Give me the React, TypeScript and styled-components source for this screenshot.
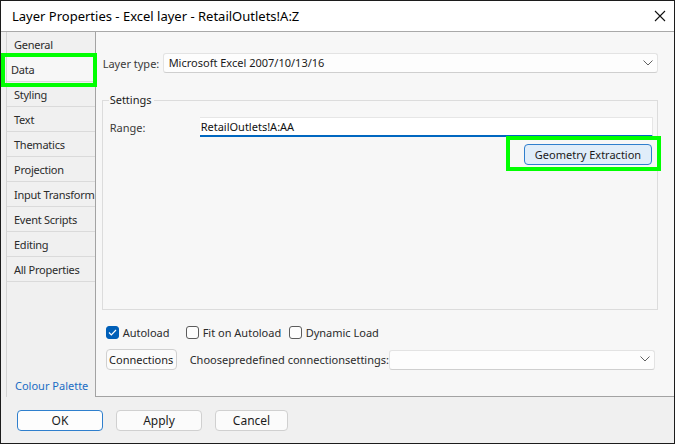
import styled, { createGlobalStyle } from "styled-components";

const GlobalStyle = createGlobalStyle`
  html, body {
    margin: 0;
    padding: 0;
    background: #ffffff;
  }
  body {
    font-family: "Noto Sans", "Open Sans", sans-serif;
    font-size: 11px;
    color: #1b1b1b;
  }
  * {
    box-sizing: border-box;
  }
`;

const Window = styled.div`
  position: relative;
  width: 675px;
  height: 444px;
  display: flex;
  flex-direction: column;
  border: 1px solid #1c1c1c;
  background: #f0f0f0;
  overflow: hidden;
`;

const TitleBar = styled.div`
  flex: 0 0 31px;
  display: flex;
  align-items: center;
  justify-content: space-between;
  padding: 0 8px 0 11px;
  background: #ffffff;
  border-bottom: 1px solid #a9a9a9;
  font-size: 13px;
  color: #000;
`;

const Body = styled.div`
  flex: 1 1 auto;
  display: flex;
  padding-left: 5px;
`;

const Sidebar = styled.div`
  width: 89px;
  display: flex;
  flex-direction: column;
  border-left: 1px solid #d4d4d4;
`;

const Tab = styled.div<{ $active?: boolean }>`
  height: 25px;
  display: flex;
  align-items: center;
  padding-left: ${(p) => (p.$active ? "4px" : "7px")};
  border-bottom: 1px solid #dadada;
  background: ${(p) => (p.$active ? "#f7f7f7" : "#f0f0f0")};
  color: #2b2b2b;
  letter-spacing: -0.25px;
  white-space: nowrap;
`;

const PaletteLink = styled.div`
  margin-top: auto;
  padding: 0 0 3px 8px;
  line-height: 16px;
  color: #1a6dc4;
`;

const Panel = styled.div`
  flex: 1 1 auto;
  display: flex;
  flex-direction: column;
  padding: 21px 16px 0 6px;
  background: #f7f7f7;
  border-left: 1px solid #a3a3a3;
  border-bottom: 1px solid #a3a3a3;
`;

const Row = styled.div`
  display: flex;
  align-items: center;
`;

const Label = styled.span<{ $w?: number }>`
  width: ${(p) => (p.$w ? `${p.$w}px` : "auto")};
  flex: 0 0 auto;
  color: #3a3a3a;
  white-space: nowrap;
`;

const Select = styled.div<{ $w?: number }>`
  ${(p) => (p.$w ? `flex: 0 0 ${p.$w}px;` : "flex: 1 1 auto;")}
  height: 20px;
  display: flex;
  align-items: center;
  justify-content: space-between;
  padding: 0 4px 1px 5px;
  background: #fdfdfd;
  border: 1px solid #e3e3e3;
  border-bottom-color: #cfcfcf;
  border-radius: 3px;
  color: #1b1b1b;
`;

const Group = styled.div`
  position: relative;
  margin-top: 27px;
  height: 210px;
  display: flex;
  flex-direction: column;
  padding: 16px 4px 0 7px;
  border: 1px solid #dcdcdc;
`;

const Legend = styled.span`
  position: absolute;
  top: -10px;
  left: 6px;
  padding: 0 2px 0 1px;
  background: #f7f7f7;
  line-height: 18px;
  color: #1b1b1b;
`;

const TextInput = styled.div`
  flex: 1 1 auto;
  height: 20px;
  display: flex;
  align-items: center;
  padding-left: 1px;
  background: #ffffff;
  border-top: 1px solid #e6e6e6;
  border-right: 1px solid #e6e6e6;
  border-bottom: 2px solid #0067c0;
  color: #111;
`;

const ButtonRow = styled.div`
  display: flex;
  justify-content: flex-end;
  margin-top: 7px;
  padding-right: 1px;
`;

const Button = styled.div<{ $w: number; $primary?: boolean; $accent?: boolean }>`
  width: ${(p) => p.$w}px;
  height: 21px;
  display: flex;
  align-items: center;
  justify-content: center;
  border-radius: 4px;
  border: 1px solid ${(p) => (p.$primary || p.$accent ? "#2f7fcd" : "#d0d0d0")};
  background: ${(p) => (p.$accent ? "#e0edf9" : p.$primary ? "#fdfdfd" : "#fbfbfb")};
  color: #1b1b1b;
  white-space: nowrap;
`;

const FooterButton = styled(Button)`
  font-size: 12px;
`;

const CheckRow = styled.div`
  display: flex;
  align-items: center;
  height: 20px;
  margin-top: 12px;
  padding-left: 4px;
`;

const CheckItem = styled.label<{ $w?: number }>`
  display: flex;
  align-items: center;
  gap: 4px;
  width: ${(p) => (p.$w ? `${p.$w}px` : "auto")};
  color: #2b2b2b;
  white-space: nowrap;
`;

const Box = styled.span<{ $checked?: boolean }>`
  width: 13px;
  height: 13px;
  display: flex;
  align-items: center;
  justify-content: center;
  border-radius: 3px;
  border: 1px solid ${(p) => (p.$checked ? "#005fb8" : "#5c5c5c")};
  background: ${(p) => (p.$checked ? "#005fb8" : "#fdfdfd")};
`;

const ConnRow = styled.div`
  display: flex;
  align-items: center;
  margin-top: 7px;
  padding-left: 4px;
  padding-right: 3px;
`;

const ConnLabel = styled.span`
  flex: 1 1 auto;
  margin-left: 13px;
  color: #2b2b2b;
  white-space: nowrap;
`;

const Footer = styled.div`
  flex: 0 0 46px;
  display: flex;
  align-items: center;
  gap: 13px;
  padding-left: 16px;
`;

const Highlight = styled.div<{ $x: number; $y: number; $w: number; $h: number }>`
  position: absolute;
  left: ${(p) => p.$x}px;
  top: ${(p) => p.$y}px;
  width: ${(p) => p.$w}px;
  height: ${(p) => p.$h}px;
  border: 4px solid #00ff00;
  pointer-events: none;
`;

const Chevron = () => (
  <svg width="10" height="6" viewBox="0 0 10 6">
    <polyline points="0.5,0.5 5,5 9.5,0.5" fill="none" stroke="#606060" strokeWidth="1" />
  </svg>
);

const Check = () => (
  <svg width="9" height="7" viewBox="0 0 9 7">
    <polyline points="1,3.5 3.3,5.8 8,1" fill="none" stroke="#ffffff" strokeWidth="1.2" />
  </svg>
);

const CloseIcon = () => (
  <svg width="12" height="12" viewBox="0 0 12 12">
    <path d="M1 1 L11 11 M11 1 L1 11" stroke="#111" strokeWidth="1.1" />
  </svg>
);

const tabs = [
  "General",
  "Data",
  "Styling",
  "Text",
  "Thematics",
  "Projection",
  "Input Transform",
  "Event Scripts",
  "Editing",
  "All Properties",
];

export default function App() {
  return (
    <Window>
      <GlobalStyle />
      <TitleBar>
        <span>Layer Properties - Excel layer - RetailOutlets!A:Z</span>
        <CloseIcon />
      </TitleBar>
      <Body>
        <Sidebar>
          {tabs.map((t) => (
            <Tab key={t} $active={t === "Data"}>
              {t}
            </Tab>
          ))}
          <PaletteLink>Colour Palette</PaletteLink>
        </Sidebar>
        <Panel>
          <Row>
            <Label $w={61} style={{ paddingLeft: 1 }}>
              Layer type:
            </Label>
            <Select>
              <span>Microsoft Excel 2007/10/13/16</span>
              <Chevron />
            </Select>
          </Row>
          <Group>
            <Legend>Settings</Legend>
            <Row>
              <Label $w={90}>Range:</Label>
              <TextInput>RetailOutlets!A:AA</TextInput>
            </Row>
            <ButtonRow>
              <Button $w={128} $accent>
                Geometry Extraction
              </Button>
            </ButtonRow>
          </Group>
          <CheckRow>
            <CheckItem $w={80}>
              <Box $checked>
                <Check />
              </Box>
              Autoload
            </CheckItem>
            <CheckItem $w={103}>
              <Box />
              Fit on Autoload
            </CheckItem>
            <CheckItem>
              <Box />
              Dynamic Load
            </CheckItem>
          </CheckRow>
          <ConnRow>
            <Button $w={71}>Connections</Button>
            <ConnLabel>Choosepredefined connectionsettings:</ConnLabel>
            <Select $w={266}>
              <span />
              <Chevron />
            </Select>
          </ConnRow>
        </Panel>
      </Body>
      <Footer>
        <FooterButton $w={86} $primary>
          OK
        </FooterButton>
        <FooterButton $w={86}>Apply</FooterButton>
        <FooterButton $w={73}>Cancel</FooterButton>
      </Footer>
      <Highlight $x={0} $y={52} $w={96} $h={34} />
      <Highlight $x={505} $y={135} $w={155} $h={35} />
    </Window>
  );
}
